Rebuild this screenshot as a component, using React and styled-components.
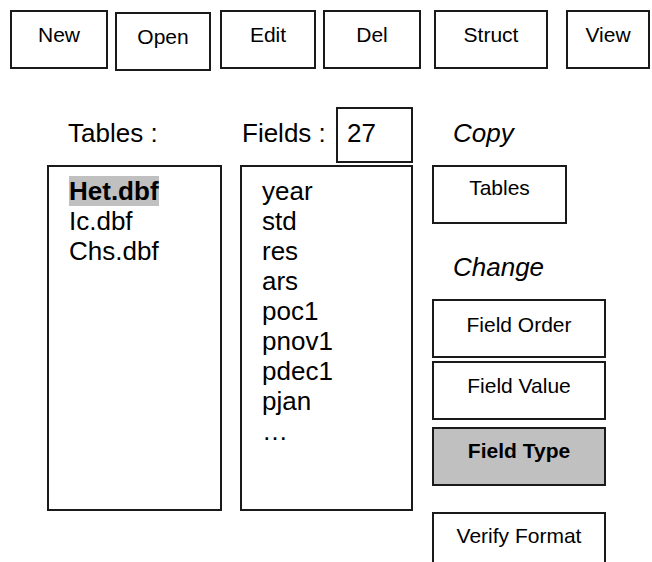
import React from 'react';
import styled, { createGlobalStyle } from 'styled-components';

const GlobalStyle = createGlobalStyle`
  html, body {
    margin: 0;
    padding: 0;
    overflow: hidden;
    background: #fff;
  }
  body {
    font-family: "Liberation Sans", Arial, sans-serif;
    color: #000;
  }
`;

const tools = [
  { label: 'New', width: 98, gap: 0 },
  { label: 'Open', width: 96, gap: 7, drop: 2 },
  { label: 'Edit', width: 96, gap: 9 },
  { label: 'Del', width: 98, gap: 7 },
  { label: 'Struct', width: 114, gap: 13 },
  { label: 'View', width: 84, gap: 18 },
];

const tables = ['Het.dbf', 'Ic.dbf', 'Chs.dbf'];
const fields = ['year', 'std', 'res', 'ars', 'poc1', 'pnov1', 'pdec1', 'pjan', '\u2026'];

const App = () => {
  return (
    <Page>
      <GlobalStyle />
      <Toolbar>
        {tools.map((t) => (
          <ToolButton key={t.label} $w={t.width} $gap={t.gap} $drop={t.drop}>
            {t.label}
          </ToolButton>
        ))}
      </Toolbar>

      <Workspace>
        <Column $w={175}>
          <ColumnHead>
            <Label $indent={21}>Tables :</Label>
          </ColumnHead>
          <ListBox>
            {tables.map((name, i) => (
              <ListItem key={name}>
                {i === 0 ? <Selected>{name}</Selected> : name}
              </ListItem>
            ))}
          </ListBox>
        </Column>

        <Column $w={173} $gap={18}>
          <ColumnHead>
            <Label $indent={2}>Fields :</Label>
            <CountBox>27</CountBox>
          </ColumnHead>
          <ListBox>
            {fields.map((name) => (
              <ListItem key={name}>{name}</ListItem>
            ))}
          </ListBox>
        </Column>

        <Column $w={180} $gap={19}>
          <ColumnHead>
            <Label $indent={21} $italic>Copy</Label>
          </ColumnHead>
          <ActionButton $w={135} $pad={9}>Tables</ActionButton>
          <SectionLabel>Change</SectionLabel>
          <ActionButton $w={174} $pad={12}>Field Order</ActionButton>
          <ActionButton $w={174} $pad={11} $gap={3}>Field Value</ActionButton>
          <ActionButton $w={174} $pad={10} $gap={7} $active>Field Type</ActionButton>
          <ActionButton $w={174} $pad={10} $gap={26}>Verify Format</ActionButton>
        </Column>
      </Workspace>
    </Page>
  );
};

export default App;

const Page = styled.div`
  width: 652px;
  height: 562px;
  overflow: hidden;
`;

const Toolbar = styled.div`
  display: flex;
  align-items: flex-start;
  padding: 10px 0 0 10px;
`;

const ToolButton = styled.div`
  box-sizing: border-box;
  flex: none;
  width: ${(p) => p.$w}px;
  height: 59px;
  margin-left: ${(p) => p.$gap || 0}px;
  margin-top: ${(p) => p.$drop || 0}px;
  padding-top: 11px;
  border: 2px solid #1a1a1a;
  font-size: 21px;
  line-height: 24px;
  text-align: center;
`;

const Workspace = styled.div`
  display: flex;
  align-items: flex-start;
  padding: 36px 0 0 47px;
`;

const Column = styled.div`
  display: flex;
  flex-direction: column;
  flex: none;
  width: ${(p) => p.$w}px;
  margin-left: ${(p) => p.$gap || 0}px;
`;

const ColumnHead = styled.div`
  display: flex;
  align-items: flex-start;
  height: 58px;
`;

const Label = styled.div`
  padding: 11px 0 0 ${(p) => p.$indent}px;
  font-size: 26px;
  line-height: 30px;
  font-style: ${(p) => (p.$italic ? 'italic' : 'normal')};
`;

const SectionLabel = styled.div`
  margin: 28px 0 17px 21px;
  font-size: 26px;
  line-height: 30px;
  font-style: italic;
`;

const CountBox = styled.div`
  box-sizing: border-box;
  margin-left: auto;
  width: 77px;
  height: 56px;
  padding: 9px 0 0 9px;
  border: 2px solid #1a1a1a;
  font-size: 26px;
  line-height: 30px;
`;

const ListBox = styled.div`
  box-sizing: border-box;
  height: 346px;
  padding: 9px 0 0 20px;
  border: 2px solid #1a1a1a;
`;

const ListItem = styled.div`
  font-size: 26px;
  line-height: 30px;
  white-space: nowrap;
`;

const Selected = styled.span`
  background: #c0c0c0;
  font-weight: bold;
`;

const ActionButton = styled.div`
  box-sizing: border-box;
  width: ${(p) => p.$w}px;
  height: 59px;
  margin-top: ${(p) => p.$gap || 0}px;
  padding-top: ${(p) => p.$pad}px;
  border: 2px solid #1a1a1a;
  background: ${(p) => (p.$active ? '#c0c0c0' : '#fff')};
  font-size: 21px;
  font-weight: ${(p) => (p.$active ? 'bold' : 'normal')};
  line-height: 24px;
  text-align: center;
`;
